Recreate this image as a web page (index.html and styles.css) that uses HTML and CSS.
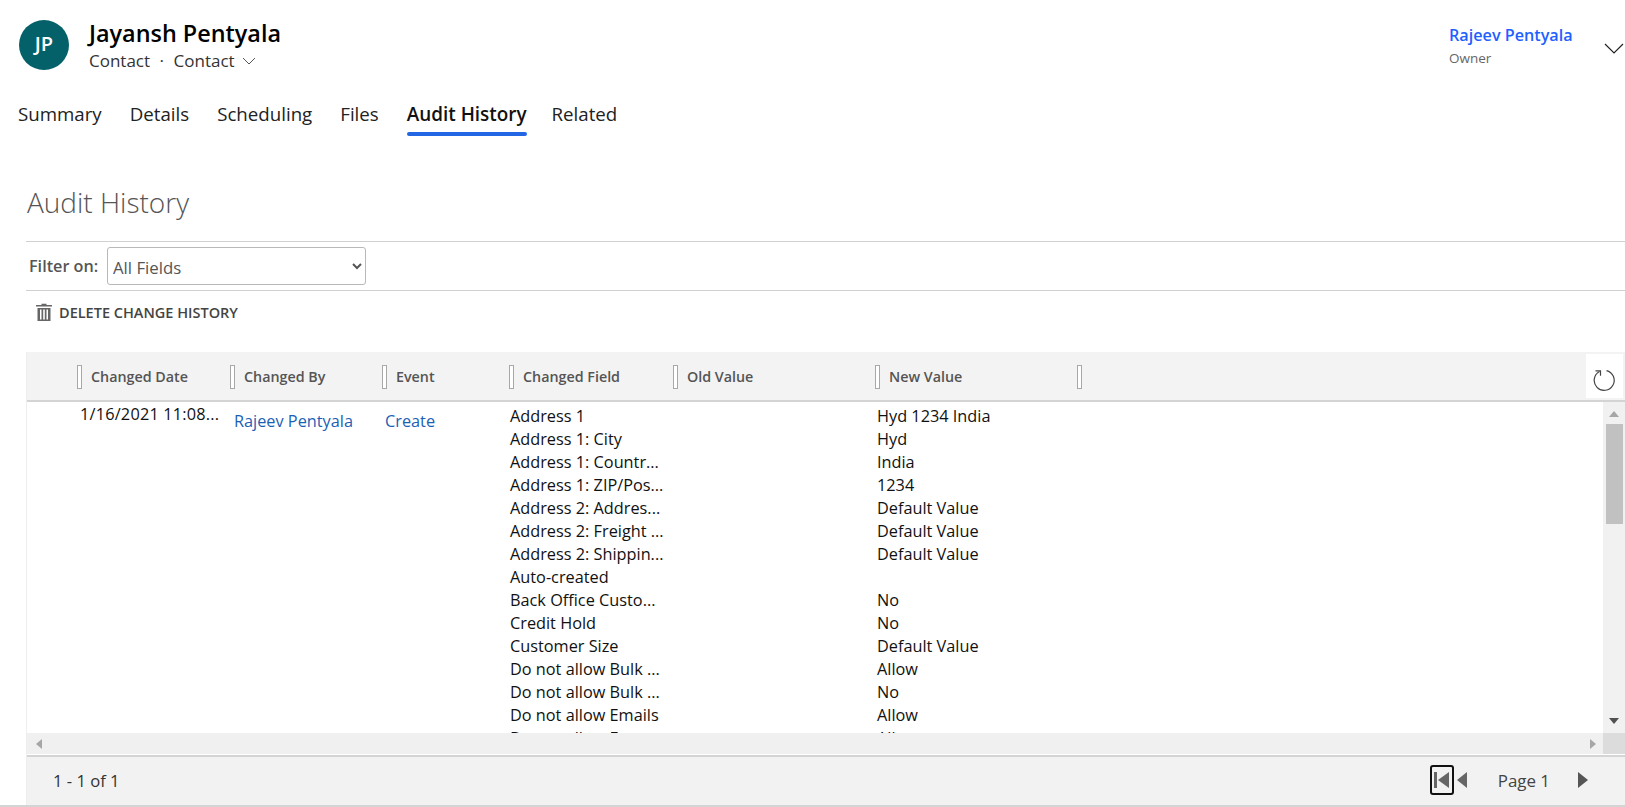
FILE: index.html
```html
<!DOCTYPE html>
<html lang="en">
<head>
    <meta charset="UTF-8">
    <title>Jayansh Pentyala - Audit History</title>
    <link rel="stylesheet" href="styles.css">
</head>
<body>
    <!-- Record header -->
    <header class="record-header">
        <div class="avatar">JP</div>
        <div class="record-title">
            <h1>Jayansh Pentyala</h1>
            <div class="record-type">
                <span>Contact</span><span class="dot">·</span><span>Contact</span>
                <svg class="type-chevron" width="14" height="8" viewBox="0 0 14 8"><path d="M1 1l6 6 6-6" fill="none" stroke="#555" stroke-width="1"/></svg>
            </div>
        </div>
        <div class="owner">
            <a class="owner-name">Rajeev Pentyala</a>
            <div class="owner-label">Owner</div>
        </div>
        <svg class="header-chevron" width="20" height="11" viewBox="0 0 20 11"><path d="M1 1l9 9 9-9" fill="none" stroke="#222" stroke-width="1.2"/></svg>
    </header>

    <!-- Tabs -->
    <nav class="tabs">
        <a class="tab">Summary</a>
        <a class="tab">Details</a>
        <a class="tab">Scheduling</a>
        <a class="tab">Files</a>
        <a class="tab active">Audit History</a>
        <a class="tab">Related</a>
    </nav>

    <main class="audit">
        <h2>Audit History</h2>

        <div class="filter-row">
            <label for="filter">Filter on:</label>
            <select id="filter"><option>All Fields</option></select>
        </div>

        <div class="command-row">
            <svg width="16" height="18" viewBox="0 0 16 18">
                <path d="M5.5 2V.8h5V2H16v1.6H0V2z" fill="#666"/>
                <path d="M1.5 5h13v13h-13zM4 6.5V16.500h1.500V6.500zM7.200 6.500V16.500h1.600V6.500zM10.500 6.500V16.500H12V6.500z" fill="#666" fill-rule="evenodd"/>
            </svg>
            <span>DELETE CHANGE HISTORY</span>
        </div>

        <div class="grid">
            <div class="grid-head">
                <div class="head-cell col-date">Changed Date</div>
                <div class="head-cell col-by">Changed By</div>
                <div class="head-cell col-event">Event</div>
                <div class="head-cell col-field">Changed Field</div>
                <div class="head-cell col-old">Old Value</div>
                <div class="head-cell col-new">New Value</div>
                <div class="head-cell col-end"></div>
                <button class="refresh">
                    <svg width="24" height="24" viewBox="0 0 24 24">
                        <path d="M8.500 3.500A10 10 0 1 0 15.500 2.600" fill="none" stroke="#444" stroke-width="1.200"/>
                        <path d="M4.500 1.800h5v5" fill="none" stroke="#444" stroke-width="1.200" transform="translate(0 1)"/>
                    </svg>
                </button>
            </div>

            <div class="grid-scroll">
                <div class="grid-body">
                    <div class="cell-date">1/16/2021 11:08...</div>
                    <a class="cell-link cell-by">Rajeev Pentyala</a>
                    <a class="cell-link cell-event">Create</a>
                    <div class="changes">
                        <div class="change"><span class="change-name">Address 1</span><span>Hyd 1234 India</span></div>
                        <div class="change"><span class="change-name">Address 1: City</span><span>Hyd</span></div>
                        <div class="change"><span class="change-name">Address 1: Countr...</span><span>India</span></div>
                        <div class="change"><span class="change-name">Address 1: ZIP/Pos...</span><span>1234</span></div>
                        <div class="change"><span class="change-name">Address 2: Addres...</span><span>Default Value</span></div>
                        <div class="change"><span class="change-name">Address 2: Freight ...</span><span>Default Value</span></div>
                        <div class="change"><span class="change-name">Address 2: Shippin...</span><span>Default Value</span></div>
                        <div class="change"><span class="change-name">Auto-created</span><span></span></div>
                        <div class="change"><span class="change-name">Back Office Custo...</span><span>No</span></div>
                        <div class="change"><span class="change-name">Credit Hold</span><span>No</span></div>
                        <div class="change"><span class="change-name">Customer Size</span><span>Default Value</span></div>
                        <div class="change"><span class="change-name">Do not allow Bulk ...</span><span>Allow</span></div>
                        <div class="change"><span class="change-name">Do not allow Bulk ...</span><span>No</span></div>
                        <div class="change"><span class="change-name">Do not allow Emails</span><span>Allow</span></div>
                        <div class="change"><span class="change-name">Do not allow Faxes</span><span>Allow</span></div>
                    </div>
                </div>
                <div class="vscroll">
                    <svg width="10" height="6" viewBox="0 0 10 6"><path d="M5 0l5 6H0z" fill="#a6a6a6"/></svg>
                    <div class="vthumb"></div>
                    <svg class="vdown" width="10" height="6" viewBox="0 0 10 6"><path d="M0 0h10L5 6z" fill="#505050"/></svg>
                </div>
            </div>

            <div class="hscroll">
                <svg width="6" height="10" viewBox="0 0 6 10"><path d="M6 0v10L0 5z" fill="#a6a6a6"/></svg>
                <svg class="hright" width="6" height="10" viewBox="0 0 6 10"><path d="M0 0v10l6-5z" fill="#a6a6a6"/></svg>
                <div class="corner"></div>
            </div>

            <div class="grid-foot">
                <span class="count">1 - 1 of 1</span>
                <div class="pager">
                    <button class="page-first">
                        <svg width="15" height="16" viewBox="0 0 15 16"><path d="M0 0h3v16H0zM15 0v16L4 8z" fill="#666"/></svg>
                    </button>
                    <svg class="page-prev" width="10" height="16" viewBox="0 0 10 16"><path d="M10 0v16L0 8z" fill="#666"/></svg>
                    <span class="page-label">Page 1</span>
                    <svg class="page-next" width="10" height="16" viewBox="0 0 10 16"><path d="M0 0v16l10-8z" fill="#555"/></svg>
                </div>
            </div>
        </div>
    </main>
    <div class="page-rule"></div>
</body>
</html>
```

FILE: styles.css
```css
* {
    margin: 0;
    padding: 0;
    box-sizing: border-box;
    font-family: 'Open Sans', sans-serif;
}

body {
    width: 1625px;
    height: 807px;
    overflow: hidden;
    background: #ffffff;
    color: #111111;
}

/* header */
.record-header {
    display: flex;
    height: 96px;
    padding: 20px 1px 0 19px;
}

.avatar {
    width: 50px;
    height: 50px;
    border-radius: 50%;
    background: #04616a;
    color: #ffffff;
    font-size: 20px;
    font-weight: 600;
    line-height: 48px;
    text-align: center;
}

.record-title {
    flex: 1;
    margin-left: 20px;
}

.record-title h1 {
    font-size: 23.400px;
    font-weight: 600;
    line-height: 26px;
    color: #000000;
}

.record-type {
    display: flex;
    align-items: center;
    margin-top: 4px;
    font-size: 17px;
    line-height: 22px;
    color: #333333;
}

.dot {
    margin: 0 9.500px;
}

.type-chevron {
    margin-left: 7px;
}

.owner {
    width: 155px;
    padding-top: 5px;
}

.owner-name {
    display: block;
    font-size: 16.200px;
    font-weight: 600;
    line-height: 20px;
    color: #1f5fff;
}

.owner-label {
    margin-top: 3px;
    font-size: 13.500px;
    line-height: 20px;
    color: #666666;
}

.header-chevron {
    margin-top: 23px;
}

/* tabs */
.tabs {
    display: flex;
    gap: 28px;
    height: 40px;
    padding-left: 18px;
}

.tab {
    font-size: 18.700px;
    line-height: 36px;
    color: #222222;
}

.tab.active {
    margin-right: -3px;
    font-size: 18.900px;
    font-weight: 600;
    color: #111111;
}

.tab.active::after {
    content: "";
    display: block;
    height: 4px;
    border-radius: 2px;
    background: #2266e3;
}

/* audit area */
.audit {
    padding-left: 26px;
}

.audit h2 {
    height: 105px;
    padding-top: 45px;
    padding-left: 1px;
    font-size: 28px;
    font-weight: 300;
    line-height: 42px;
    color: #555555;
}

.filter-row {
    display: flex;
    align-items: center;
    height: 50px;
    padding-left: 3px;
    border-top: 1px solid #d0d0d0;
    border-bottom: 1px solid #d0d0d0;
}

.filter-row label {
    width: 78px;
    font-size: 16.200px;
    font-weight: 600;
    color: #555555;
}

.filter-row select {
    width: 259px;
    height: 38px;
    padding: 2px 0 0 1px;
    border: 1px solid #b8b8b8;
    border-radius: 3px;
    background: #ffffff;
    font-size: 16.800px;
    color: #555555;
}

.command-row {
    display: flex;
    align-items: center;
    gap: 7px;
    height: 42px;
    padding-left: 10px;
    font-size: 14.500px;
    font-weight: 600;
    color: #444444;
}

/* grid */
.grid {
    margin-top: 19px;
    border-left: 1px solid #eeeeee;
}

.grid-head {
    display: flex;
    align-items: center;
    height: 50px;
    padding-left: 50px;
    background: #f3f3f3;
    border-bottom: 2px solid #d4d4d4;
}

.head-cell {
    display: flex;
    align-items: center;
    padding-top: 1px;
    font-size: 14.300px;
    font-weight: 600;
    color: #555555;
}

.head-cell::before {
    content: "";
    flex: none;
    width: 3px;
    height: 22px;
    margin-right: 9px;
    border: 1px solid #a8a8a8;
    background: #ffffff;
}

.col-date { width: 153px; }
.col-by { width: 152px; }
.col-event { width: 127px; }
.col-field { width: 164px; }
.col-old { width: 202px; }
.col-new { width: 202px; }
.col-end { width: 12px; }

.refresh {
    width: 37px;
    height: 44px;
    margin-left: auto;
    margin-right: 2px;
    border: none;
    background: #ffffff;
}

.refresh svg {
    display: block;
    margin: 7px 0 0 5px;
}

.grid-scroll {
    display: flex;
    height: 331px;
    overflow: hidden;
}

.grid-body {
    flex: 1;
    display: grid;
    grid-template-columns: 53px 154px 151px 125px 1fr;
    align-content: start;
    font-size: 16.300px;
    line-height: 23px;
    color: #111111;
}

.cell-date {
    grid-column: 2;
    padding-top: 1px;
    letter-spacing: 0.2px;
    white-space: nowrap;
}

.cell-link {
    padding-top: 8px;
    color: #1b5fb5;
}

.changes {
    grid-column: 5;
    padding-top: 3px;
}

.change {
    display: flex;
    height: 23px;
    white-space: nowrap;
}

.change-name {
    flex: none;
    width: 367px;
}

.vscroll {
    display: flex;
    flex-direction: column;
    align-items: center;
    width: 22px;
    background: #f1f1f1;
    padding-top: 9px;
}

.vthumb {
    width: 17px;
    height: 100px;
    margin-top: 7px;
    background: #c1c1c1;
}

.vdown {
    margin-top: auto;
    margin-bottom: 9px;
}

.hscroll {
    display: flex;
    align-items: center;
    height: 21px;
    padding-left: 9px;
    background: #f0f0f0;
}

.hright {
    margin-left: auto;
    margin-right: 7px;
}

.corner {
    width: 22px;
    height: 21px;
    background: #dcdcdc;
}

.grid-foot {
    display: flex;
    align-items: center;
    justify-content: space-between;
    height: 50px;
    margin-top: 1px;
    padding: 0 37px 2px 26px;
    background: #f2f2f2;
    border-top: 2px solid #d4d4d4;
    font-size: 16.600px;
    color: #333333;
}

.pager {
    display: flex;
    align-items: center;
}

.page-first {
    display: flex;
    align-items: center;
    justify-content: center;
    width: 24px;
    height: 30px;
    border: 2px solid #111111;
    border-radius: 3px;
    background: transparent;
}

.page-prev {
    margin-left: 3px;
}

.page-label {
    margin: 0 28px 0 31px;
    font-size: 16.900px;
    color: #444444;
}

.page-rule {
    height: 2px;
    background: #d4d4d4;
}
```
